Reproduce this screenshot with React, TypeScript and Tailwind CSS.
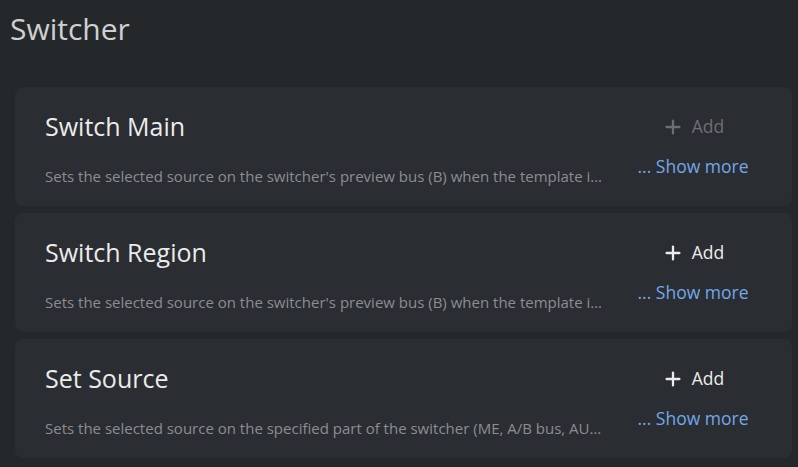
import { Plus } from 'lucide-react';

const actions = [
  {
    title: 'Switch Main',
    desc: "Sets the selected source on the switcher's preview bus (B) when the template is taken, and switches it to the program bus (A) when the template is played.",
    disabled: true,
  },
  {
    title: 'Switch Region',
    desc: "Sets the selected source on the switcher's preview bus (B) when the template is taken, and switches it to the program bus (A) when the template is played.",
    disabled: false,
  },
  {
    title: 'Set Source',
    desc: 'Sets the selected source on the specified part of the switcher (ME, A/B bus, AUX, keyer) when the template is taken.',
    disabled: false,
  },
];

function ActionCard({ title, desc, disabled }: { title: string; desc: string; disabled: boolean }) {
  return (
    <div className="flex h-[119px] rounded-lg bg-[#2a2d31] pl-[30px]">
      <div className="flex min-w-0 flex-1 flex-col pt-[23px]">
        <h3 className="text-[25px] leading-[33px] text-[#ebebeb]">{title}</h3>
        <p className="mt-[23px] w-[558px] truncate text-[15px] leading-[20px] text-[#8b8e91]">{desc}</p>
      </div>
      <div className="mr-[24px] flex w-[150px] flex-col items-center pt-[27px]">
        <button
          className={`flex items-center gap-[8px] text-[17.5px] leading-[25px] ${
            disabled ? 'text-[#6c6f72]' : 'text-[#ebebeb]'
          }`}
        >
          <Plus size={22} strokeWidth={2.5} />
          Add
        </button>
        <button className="mt-[15px] text-[17.5px] leading-[25px] text-[#72a8ea]">... Show more</button>
      </div>
    </div>
  );
}

export default function App() {
  return (
    <div
      className="min-h-[467px] bg-[#25282b] pl-[15px] pr-[6px]"
      style={{ fontFamily: '"Open Sans", "Noto Sans", sans-serif' }}
    >
      <h1 className="-ml-[5px] pt-[10px] text-[30px] leading-[38px] text-[#cfd0d1]">Switcher</h1>
      <div className="mt-[39px] flex flex-col gap-[7px]">
        {actions.map((a) => (
          <ActionCard key={a.title} {...a} />
        ))}
      </div>
    </div>
  );
}
